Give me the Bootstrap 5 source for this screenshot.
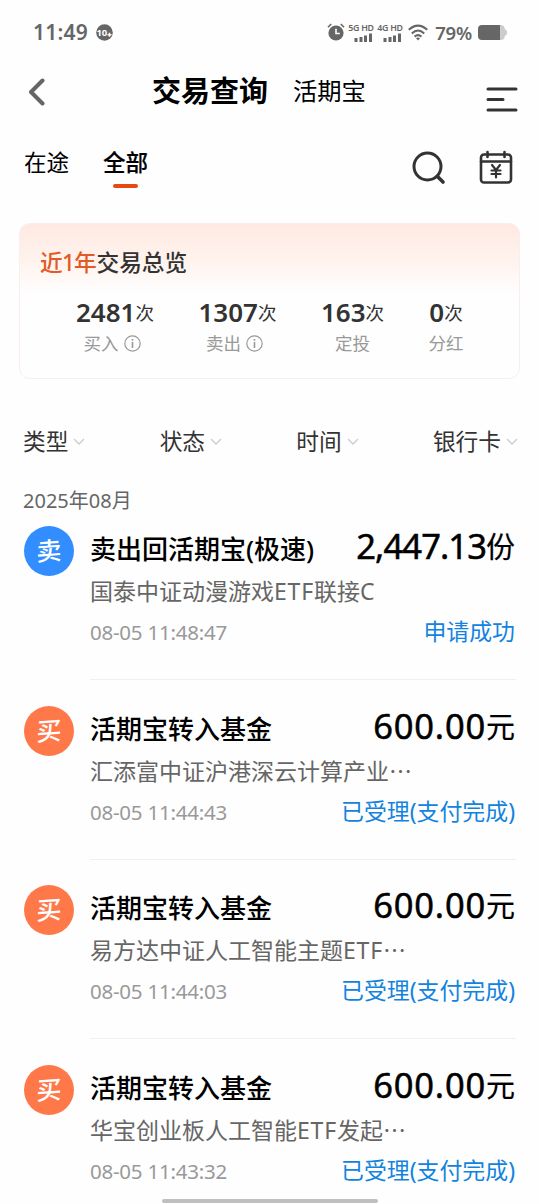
<!DOCTYPE html>
<html lang="zh-CN">
<head>
<meta charset="utf-8">
<meta name="viewport" content="width=device-width, initial-scale=1">
<title>交易查询</title>
<link href="https://cdn.jsdelivr.net/npm/bootstrap@5.3.0/dist/css/bootstrap.min.css" rel="stylesheet">
<style>
  body { font-family: "Noto Sans", "Noto Sans CJK SC", sans-serif; color: #000; background: #fefefe; white-space: nowrap; }
  .screen { width: 540px; height: 1204px; }
  svg { display: block; flex: none; }
  .statusbar { height: 64px; padding: 0 33px; color: #666; }
  .clock { font-size: 21px; font-weight: 600; letter-spacing: .2px; line-height: 64px; }
  .pct { font-size: 18.5px; font-weight: 600; line-height: 67px; letter-spacing: -.2px; }
  .net { font-size: 8.8px; font-weight: 600; line-height: 10px; width: 25px; letter-spacing: -.25px; }
  .titlebar { height: 56px; padding: 0 22px 0 27px; }
  .t-main { font-size: 29px; font-weight: 700; line-height: 54px; margin-left: 107px; }
  .t-sub { font-size: 24.3px; line-height: 54px; margin-left: 25px; }
  .tabs { height: 103px; padding: 22px 27px 0 24px; font-size: 22.5px; }
  .tab-item { line-height: 42px; }
  .tab-item.active { font-weight: 500; -webkit-text-stroke: .2px #000; }
  .tab-item.active::after { content: ""; display: block; width: 25px; height: 4px; border-radius: 2px; background: #e64a14; margin: 0 auto; }
  .overview { margin: 0 20px 0 19px; height: 156px; border: 1px solid #f8efeb; border-radius: 11px; background: linear-gradient(#ffe9e2 0, #fff3ee 38px, #fefefe 69px); color: #333; padding: 19px 0 0 20px; }
  .ov-title { font-size: 22.7px; font-weight: 500; line-height: 40px; height: 39px; }
  .hot { color: #e25a26; letter-spacing: -.8px; margin-right: .5px; }
  .stats { margin-left: -19px; padding-top: 11px; }
  .num { font-size: 26px; font-weight: 600; line-height: 38px; height: 36px; }
  .num small { font-size: 18.5px; font-weight: 400; position: relative; top: -2px; }
  .lbl { font-size: 17.5px; font-weight: 400; color: #999; line-height: 28px; height: 28px; }
  .lbl.info { margin-left: -6px; }
  .lbl svg { margin-left: 5px; }
  .filters { margin-top: 42px; padding: 0 22px 0 23px; height: 41px; font-size: 22.7px; line-height: 42px; color: #333; }
  .month { margin: 17px 0 0 23px; height: 47px; line-height: 44px; font-size: 20px; color: #666; }
  .entry { margin: 0 24px 25.5px; height: 154px; }
  .entry-body { margin-left: 16px; flex: 1; height: 154px; border-bottom: 1px solid #f0f0f0; }
  .entry:last-child .entry-body { border: 0; }
  .who { width: 50px; height: 50px; color: #fff; font-size: 25px; font-weight: 500; line-height: 49px; text-align: center; background: #ff7849; }
  .who.sell { background: #328dff; }
  .who span { display: block; transform: skewY(-4deg); }
  .name { font-size: 26px; font-weight: 500; line-height: 46px; height: 46px; }
  .amt { font-size: 34.5px; line-height: 40px; height: 46px; padding-right: 1px; font-weight: 400; letter-spacing: .8px; -webkit-text-stroke: .5px #000; }
  .amt.long { letter-spacing: -.9px; }
  .amt i { font-style: normal; font-size: 29px; letter-spacing: 0; position: relative; top: -1px; -webkit-text-stroke: .2px #000; }
  .fund { font-size: 23px; line-height: 38px; height: 38px; color: #666; }
  .etf { letter-spacing: .8px; }
  .when { font-size: 20.5px; line-height: 44px; color: #999; letter-spacing: -.23px; }
  .state { font-size: 22.9px; line-height: 44px; color: #1283de; padding-right: 1px; }
  .homebar { position: absolute; left: 162px; top: 1199px; width: 216px; height: 4px; border-radius: 2px; background: #bfbfbf; }
</style>
</head>
<body>
<main class="screen position-relative overflow-hidden">
  <header class="statusbar d-flex align-items-center">
    <span class="clock">11:49</span>
    <svg class="ms-2" width="17" height="17" viewBox="0 0 17 17"><circle cx="8.5" cy="8.5" r="8.3" fill="#666"/><text x="0.6" y="12" font-size="9.5" font-weight="700" fill="#fff" letter-spacing="-.3">10</text><path d="M13.5 8.8v4M11.5 10.8h4" stroke="#fff" stroke-width="1.5"/></svg>
    <div class="ms-auto d-flex align-items-center">
      <svg width="18" height="18" viewBox="0 0 18 18"><circle cx="9" cy="10" r="7.6" fill="#666"/><path d="M1 4.2 4.2 1M17 4.2 13.8 1" stroke="#666" stroke-width="1.6"/><path d="M9 5.8v4.7h3.8" fill="none" stroke="#fff" stroke-width="1.6"/></svg>
      <div class="net" style="margin-left:3px"><div>5G HD</div><svg width="25" height="9" viewBox="0 0 25 9" fill="#666"><path d="M6.500 5H9.500v4h-3zM11.500 4h3v5h-3zM16 2.500h3V9h-3zM21 .5h3V9h-3z"/></svg></div>
      <div class="net" style="margin-left:4px"><div>4G HD</div><svg width="25" height="9" viewBox="0 0 25 9" fill="#666"><path d="M6.500 5H9.500v4h-3zM11.500 4h3v5h-3zM16 2.500h3V9h-3zM21 .5h3V9h-3z"/></svg></div>
      <svg style="margin-left:6px" width="20" height="17" viewBox="0 0 20 17" fill="none" stroke="#666" stroke-width="2.1"><path d="M.8 5.800Q10-2.500 19.200 5.800M3.800 9.400Q10 3.600 16.200 9.400M6.600 12.600Q10 9.500 13.400 12.600"/><path d="m10 16.500-2-2.200q2-1.500 4 0z" fill="#666" stroke="none"/></svg>
      <span class="pct" style="margin-left:7px">79%</span>
      <svg style="margin-left:6px" width="29" height="15" viewBox="0 0 29 15"><path d="M20 0h3q3.500 0 4 4.500 2 0 2 3t-2 3Q26.500 15 23 15h-3z" fill="#ccc"/><path d="M4 0h18v15H4q-4 0-4-4V4q0-4 4-4z" fill="#666"/></svg>
    </div>
  </header>

  <nav class="titlebar d-flex">
    <svg style="margin-top:14px" width="18" height="28" viewBox="0 0 18 28" fill="none" stroke="#666" stroke-width="4" stroke-linecap="round" stroke-linejoin="round"><path d="M15.500 2.500 4 14l11.500 11.500"/></svg>
    <span class="t-main">交易查询</span>
    <span class="t-sub">活期宝</span>
    <svg class="ms-auto" style="margin-top:22px" width="32" height="28" viewBox="0 0 32 28" stroke="#333" stroke-width="3" stroke-linecap="round"><path d="M2 3h28M2 13.500h15M2 24h28"/></svg>
  </nav>

  <div class="tabs d-flex">
    <span class="tab-item">在途</span>
    <span class="tab-item active" style="margin-left:34px">全部</span>
    <svg class="ms-auto" style="margin-top:8px" width="36" height="36" viewBox="0 0 36 36" fill="none" stroke="#333" stroke-width="3" stroke-linecap="round"><circle cx="16.500" cy="16.500" r="13.500"/><path d="m26.500 26.500 5.500 5.500" stroke-width="3.600"/></svg>
    <svg style="margin:8px 0 0 32px" width="34" height="34" viewBox="0 0 34 34" fill="none" stroke="#333" stroke-width="2.600" stroke-linecap="round"><rect x="2" y="4.500" width="30" height="28" rx="3"/><path d="M2 11.500h30M8.500 2v5M25.500 2v5"/><path d="m13 15 4 5 4-5M17 20v7.500M12.500 20.500h9M12.500 24h9" stroke-width="2.200"/></svg>
  </div>

  <section class="overview">
    <div class="ov-title"><span class="hot">近1年</span>交易总览</div>
    <div class="stats d-flex text-center">
      <div style="width:122px;margin-left:33px"><div class="num">2481<small>次</small></div><div class="lbl info d-flex justify-content-center align-items-center">买入<svg width="17" height="17" viewBox="0 0 17 17" fill="none" stroke="#999" stroke-width="1.200"><circle cx="8.500" cy="8.500" r="7.700"/><path d="M8.500 7v6M8.500 4v1.800" stroke-width="1.600"/></svg></div></div>
      <div style="width:123px"><div class="num">1307<small>次</small></div><div class="lbl info d-flex justify-content-center align-items-center">卖出<svg width="17" height="17" viewBox="0 0 17 17" fill="none" stroke="#999" stroke-width="1.200"><circle cx="8.500" cy="8.500" r="7.700"/><path d="M8.500 7v6M8.500 4v1.800" stroke-width="1.600"/></svg></div></div>
      <div style="width:107px"><div class="num">163<small>次</small></div><div class="lbl">定投</div></div>
      <div style="width:80px"><div class="num">0<small>次</small></div><div class="lbl">分红</div></div>
    </div>
  </section>

  <div class="filters d-flex justify-content-between">
    <div class="d-flex align-items-center">类型<svg style="margin-left:5px" width="12" height="8" viewBox="0 0 12 8" fill="none" stroke="#ccc" stroke-width="1.300"><path d="m1 1 5 5 5-5"/></svg></div>
    <div class="d-flex align-items-center">状态<svg style="margin-left:5px" width="12" height="8" viewBox="0 0 12 8" fill="none" stroke="#ccc" stroke-width="1.300"><path d="m1 1 5 5 5-5"/></svg></div>
    <div class="d-flex align-items-center">时间<svg style="margin-left:5px" width="12" height="8" viewBox="0 0 12 8" fill="none" stroke="#ccc" stroke-width="1.300"><path d="m1 1 5 5 5-5"/></svg></div>
    <div class="d-flex align-items-center">银行卡<svg style="margin-left:5px" width="12" height="8" viewBox="0 0 12 8" fill="none" stroke="#ccc" stroke-width="1.300"><path d="m1 1 5 5 5-5"/></svg></div>
  </div>

  <div class="month">2025年08月</div>

  <section>
    <article class="entry d-flex">
      <div class="who sell rounded-circle"><span>卖</span></div>
      <div class="entry-body">
        <div class="d-flex justify-content-between"><div class="name">卖出回活期宝(极速)</div><div class="amt long">2,447.13<i>份</i></div></div>
        <div class="fund">国泰中证动漫游戏<span class="etf">ETF</span>联接C</div>
        <div class="d-flex justify-content-between"><div class="when">08-05 11:48:47</div><div class="state">申请成功</div></div>
      </div>
    </article>
    <article class="entry d-flex">
      <div class="who rounded-circle"><span>买</span></div>
      <div class="entry-body">
        <div class="d-flex justify-content-between"><div class="name">活期宝转入基金</div><div class="amt">600.00<i>元</i></div></div>
        <div class="fund">汇添富中证沪港深云计算产业⋯</div>
        <div class="d-flex justify-content-between"><div class="when">08-05 11:44:43</div><div class="state">已受理(支付完成)</div></div>
      </div>
    </article>
    <article class="entry d-flex">
      <div class="who rounded-circle"><span>买</span></div>
      <div class="entry-body">
        <div class="d-flex justify-content-between"><div class="name">活期宝转入基金</div><div class="amt">600.00<i>元</i></div></div>
        <div class="fund">易方达中证人工智能主题<span class="etf">ETF</span>⋯</div>
        <div class="d-flex justify-content-between"><div class="when">08-05 11:44:03</div><div class="state">已受理(支付完成)</div></div>
      </div>
    </article>
    <article class="entry d-flex">
      <div class="who rounded-circle"><span>买</span></div>
      <div class="entry-body">
        <div class="d-flex justify-content-between"><div class="name">活期宝转入基金</div><div class="amt">600.00<i>元</i></div></div>
        <div class="fund">华宝创业板人工智能<span class="etf">ETF</span>发起⋯</div>
        <div class="d-flex justify-content-between"><div class="when">08-05 11:43:32</div><div class="state">已受理(支付完成)</div></div>
      </div>
    </article>
  </section>
  <div class="homebar"></div>
</main>
<script src="https://cdn.jsdelivr.net/npm/bootstrap@5.3.0/dist/js/bootstrap.bundle.min.js"></script>
</body>
</html>
